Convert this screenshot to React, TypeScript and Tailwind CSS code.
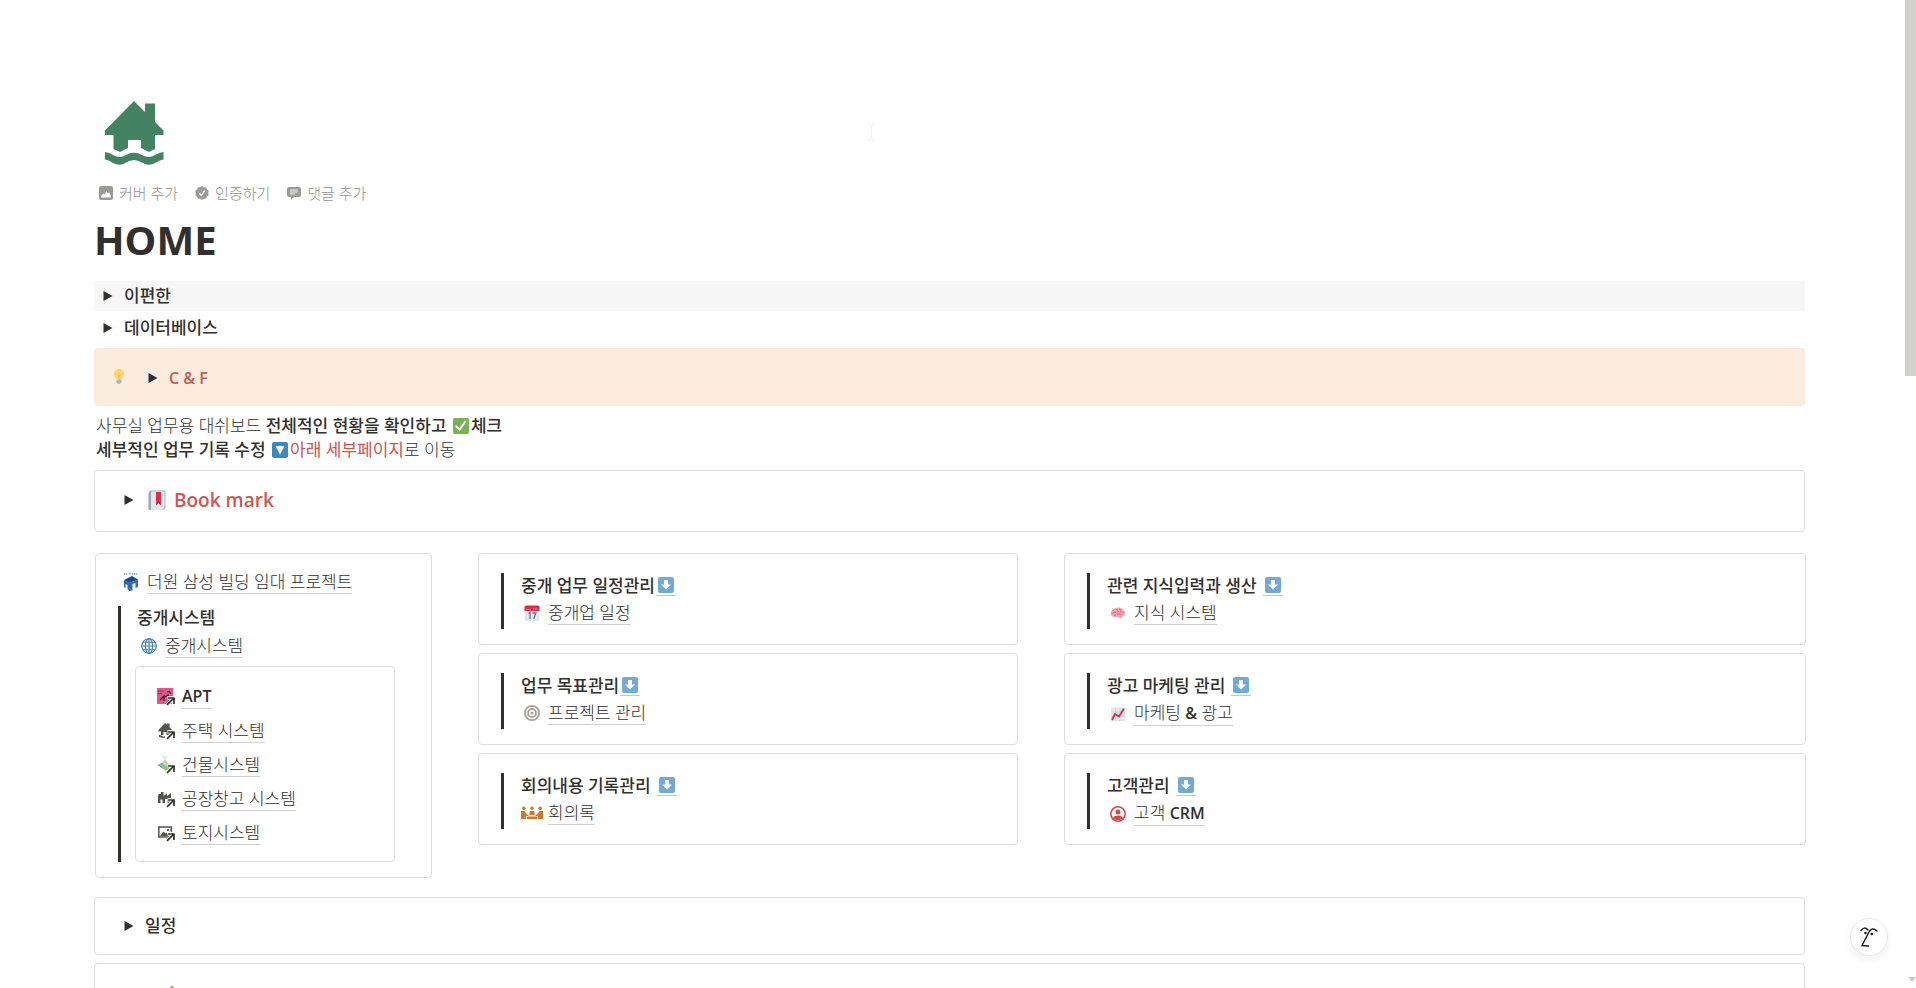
import type { ReactNode } from 'react'

const latin = "font-['Open_Sans','Noto_Sans_CJK_KR',sans-serif]"

function Arrow() {
  return (
    <svg width="10" height="10" viewBox="0 0 10 10" className="shrink-0">
      <path d="M0.5 0 9.5 5 0.5 10Z" fill="#32302c" />
    </svg>
  )
}

function HomeIcon() {
  return (
    <svg width="60" height="66" viewBox="0 0 60 66" fill="#448361">
      <path d="M30 0 41 11V2.5H51V21L59.5 29.500V34H51V48L45 51 37 47V39H24V47L16 51 9.500 48V34H1V29.500Z" />
      <path d="M1 51Q5 51.500 9 54 16 58 22 54 30 49.500 38 54 45 58 51 54 55 51.500 59.500 51V58.500Q56 59 52 61.500 45 66 38 61.500 30 56.500 22 61.500 16 66 8 61.500 5 59 1 58.500Z" />
    </svg>
  )
}

function PhotoIcon() {
  return (
    <svg width="14" height="14" viewBox="0 0 14 14">
      <rect width="14" height="14" rx="2" fill="#9b9a97" />
      <path d="M2 11.500V10L4.500 7.500 5.500 8.500 7.500 4.800 9 7.500 10 6.500 12 10V11.500Z" fill="#fff" />
    </svg>
  )
}

function VerifyIcon() {
  return (
    <svg width="14" height="14" viewBox="0 0 14 14">
      <path d="M7 0 8.900 1.300 11.200 1.400 12 3.600 13.800 5 13.200 7.200 13.800 9.300 11.900 10.600 11.100 12.700 8.900 12.800 7 14 5.100 12.800 2.900 12.700 2.100 10.600 0.200 9.300 0.800 7.200 0.200 5 2 3.600 2.800 1.400 5.100 1.300Z" fill="#9b9a97" />
      <path d="M4.300 7.300 6.300 9.500 9.700 4.700" fill="none" stroke="#fff" strokeWidth="1.300" />
    </svg>
  )
}

function CommentIcon() {
  return (
    <svg width="14" height="14" viewBox="0 0 14 14">
      <path d="M2 1H12Q14 1 14 3V9Q14 11 12 11H7L4 13.800V11H2Q0 11 0 9V3Q0 1 2 1Z" fill="#9b9a97" />
      <path d="M3 4H11M3 6H11M3 8H8" stroke="#fff" strokeWidth="0.900" />
    </svg>
  )
}

function BulbIcon() {
  return (
    <svg width="12" height="18" viewBox="0 0 12 18">
      <path d="M6 1C2.500 1 1 3.500 1 6 1 8.500 3 9.500 3.300 12H8.700C9 9.500 11 8.500 11 6 11 3.500 9.500 1 6 1Z" fill="#ffd66b" />
      <path d="M4.500 7 6 8 7.500 7M6 8V12" stroke="#f3aa3c" strokeWidth="0.700" fill="none" />
      <path d="M3.500 12H8.500V14.500L7 16H5L3.500 14.500Z" fill="#9fbccb" />
    </svg>
  )
}

function CheckEmoji() {
  return (
    <svg width="16" height="16" viewBox="0 0 16 16" className="mx-0.5 inline-block align-[-2px]">
      <rect width="16" height="16" rx="2" fill="#77b255" />
      <path d="M3.300 8.300 6.500 11.800 12.300 3.500" fill="none" stroke="#fff" strokeWidth="2" strokeLinecap="round" />
    </svg>
  )
}

function DownEmoji() {
  return (
    <svg width="16" height="16" viewBox="0 0 16 16" className="mx-0.5 inline-block align-[-2px]">
      <rect width="16" height="16" rx="2" fill="#3b88c3" />
      <path d="M3.500 4H12.500L8 12.500Z" fill="#fff" />
    </svg>
  )
}

function BookIcon() {
  return (
    <svg width="18" height="20" viewBox="0 0 18 20">
      <rect x="1" y="0.500" width="16.500" height="19" rx="2" fill="#99aab5" />
      <rect x="3" y="1.500" width="13.500" height="17" rx="1" fill="#fff" />
      <rect x="0.500" y="2" width="14.500" height="18" rx="1" fill="#e1e8ed" />
      <path d="M0.500 3V19Q0.500 20 3 20V2Q1 1.500 0.500 3Z" fill="#99aab5" />
      <path d="M8 2H13V15.500L10.500 13 8 15.500Z" fill="#dd2e44" />
    </svg>
  )
}

function JumpEmoji() {
  return (
    <svg width="16" height="16" viewBox="0 0 16 16">
      <rect width="16" height="16" rx="2" fill="#73aad4" />
      <path d="M6 3H10V7.500H13L8 12.500 3 7.500H6Z" fill="#fff" />
    </svg>
  )
}

function BuildingLogo() {
  return (
    <svg width="16" height="20" viewBox="0 0 16 20">
      <path d="M1 2H5M6 1.500H8M9 2H14" stroke="#7d9fc4" strokeWidth="1.500" strokeDasharray="1.500 0.500" />
      <path d="M1 8 9 4 15 7.500 6 11Z" fill="#16488c" />
      <path d="M1 8 6 11V18L4.500 17V13L2.500 12V16L1 15Z" fill="#2a67b0" />
      <path d="M6 11 15 7.500V15L12.500 16V11L9.500 12V18.500L6 19Z" fill="#2f6db5" />
    </svg>
  )
}

function GlobeIcon() {
  return (
    <svg width="16" height="16" viewBox="0 0 16 16" fill="none" stroke="#3a80b8" strokeWidth="1.100">
      <circle cx="8" cy="8" r="7.300" />
      <ellipse cx="8" cy="8" rx="3.600" ry="7.300" />
      <path d="M8 0.700V15.300M0.700 8H15.300M2 4.300H14M2 11.700H14" />
    </svg>
  )
}

function Shortcut({ children }: { children: ReactNode }) {
  return (
    <svg width="18" height="18" viewBox="0 0 18 18">
      {children}
      <path d="M10 16.800 16.200 10.500M10.500 9.800H16.800V16" fill="none" stroke="#fff" strokeWidth="3.500" />
      <path d="M10 16.800 16.500 10.500M11 10H17V16" fill="none" stroke="#32302c" strokeWidth="1.700" />
    </svg>
  )
}

function AptIcon() {
  return (
    <Shortcut>
      <rect width="16" height="16" fill="#e0568a" />
      <path d="M1 3H7M1 5.500H5" stroke="#7d2347" strokeWidth="1.200" strokeDasharray="1.500 0.500" />
      <path d="M3 12 7 8V13M8 9 11 7 13 10M10 4 12 3.500 14 6" stroke="#3c1527" strokeWidth="1.200" fill="none" />
    </Shortcut>
  )
}

function CottageIcon() {
  return (
    <Shortcut>
      <path d="M8 1 10 3V1.500H12.500V5L15 8V9.500H13V13H9.500V10H6.500V13H4V9.500H1.500V8ZM2 13Q4 13 5 14 7 15 8 14V15.500Q5 16.500 2 14.800Z" fill="#55534e" />
    </Shortcut>
  )
}

function IslandIcon() {
  return (
    <Shortcut>
      <path d="M0.500 9 8 5.500 15.500 10 9 15Z" fill="#91c46c" />
      <path d="M0.500 9 4 7.500 7 10 4.500 11.500Z" fill="#6db5b8" />
      <path d="M6 8V5.500L8 3.500 10.500 6V9.500L8 10.500Z" fill="#c9cfc3" />
      <path d="M5.500 1H10M7.800 1V5" stroke="#b5dcec" strokeWidth="1" />
    </Shortcut>
  )
}

function FactoryIcon() {
  return (
    <Shortcut>
      <path d="M1.500 4H4V2H6.500V6L10 3.500V6L14 3V13H10.500V9H8V13H5.500V9.500H3.500V13H1V6.500Z" fill="#55534e" />
    </Shortcut>
  )
}

function LandscapeIcon() {
  return (
    <Shortcut>
      <rect x="1.800" y="3" width="12.500" height="10" fill="none" stroke="#55534e" strokeWidth="1.500" />
      <path d="M3 12 6.500 7.500 8.500 9.500 9.500 8.500 12 12Z" fill="#55534e" />
      <circle cx="11" cy="6" r="1.100" fill="#55534e" />
    </Shortcut>
  )
}

function CalendarIcon() {
  return (
    <svg width="16" height="16" viewBox="0 0 16 16">
      <rect x="0.500" y="1" width="15" height="15" rx="1.500" fill="#e1e8ed" />
      <path d="M0.500 6V2Q0.500 0.500 2 0.500H14Q15.500 0.500 15.500 2V6Z" fill="#dd2e44" />
      <path d="M2.500 4.500H7M9 4H13" stroke="#f5b8c0" strokeWidth="1" strokeDasharray="1 0.600" />
      <path d="M4.500 8.500 6 7.500V14M8.500 8H11.800L9.800 14" fill="none" stroke="#66757f" strokeWidth="1.300" />
    </svg>
  )
}

function TargetIcon() {
  return (
    <svg width="16" height="16" viewBox="0 0 16 16" fill="none" stroke="#a5a29a" strokeWidth="1.800">
      <circle cx="8" cy="8" r="7.100" />
      <circle cx="8" cy="8" r="4" />
      <circle cx="8" cy="8" r="1.500" fill="#a5a29a" stroke="none" />
    </svg>
  )
}

function MeetingIcon() {
  return (
    <svg width="22" height="14" viewBox="0 0 22 14" fill="#cb7b22">
      <circle cx="2.800" cy="2.300" r="1.800" />
      <circle cx="11" cy="2.300" r="1.800" />
      <circle cx="19.200" cy="2.300" r="1.800" />
      <path d="M0 5H3.500L6 8.500H7.500V10H5V13H0ZM22 5H18.500L16 8.500H14.500V10H17V13H22ZM8.500 5H13.500V9H8.500ZM6 10.500H16V13H6Z" />
    </svg>
  )
}

function BrainIcon() {
  return (
    <svg width="16" height="16" viewBox="0 0 16 16">
      <path d="M1 10Q0 7 2.500 5 4.500 2.500 8 2.500 11 2 13 4.500 15.500 6.500 15 9.500 15 11.500 12.500 11.500 12 14 9.500 13 8 11.500 5.500 12 2 12.500 1 10Z" fill="#f4a3b4" />
      <path d="M2.500 8Q4 6 6 7.500M6 4.500Q8 4 8 6.500M9 4Q12 5 10.500 7.500M7 9.500Q9 8 11 10M12 6.500 13.500 8M4 10H6" fill="none" stroke="#dc617e" strokeWidth="0.900" />
    </svg>
  )
}

function ChartIcon() {
  return (
    <svg width="16" height="16" viewBox="0 0 16 16">
      <rect x="1" y="1.500" width="14" height="13.500" fill="#dfe7ed" />
      <path d="M1 6H15M1 10.500H15M5.500 1.500V15M10 1.500V15" stroke="#c3d0d9" strokeWidth="0.700" />
      <path d="M2 14 5 8 9 10.500 14 2.500" fill="none" stroke="#d6304a" strokeWidth="1.800" />
    </svg>
  )
}

function PersonIcon() {
  return (
    <svg width="16" height="16" viewBox="0 0 16 16">
      <circle cx="8" cy="8" r="7.200" fill="none" stroke="#d44c47" strokeWidth="1.600" />
      <circle cx="8" cy="6" r="2.500" fill="#d44c47" />
      <path d="M3 12.500Q3.500 9.500 8 9.500T13 12.500Q8 16 3 12.500Z" fill="#d44c47" />
    </svg>
  )
}

function PageLink({ icon, children }: { icon: ReactNode; children: ReactNode }) {
  return (
    <a href="#" className="flex items-center gap-[5px]">
      <span className="flex w-[22px] shrink-0 justify-center">{icon}</span>
      <span className="border-b border-[#d0d0ce] leading-[23px] font-light">{children}</span>
    </a>
  )
}

const columns = [
  [
    { title: '중개 업무 일정관리', gap: false, icon: <CalendarIcon />, link: '중개업 일정' },
    { title: '업무 목표관리', gap: false, icon: <TargetIcon />, link: '프로젝트 관리' },
    { title: '회의내용 기록관리', gap: true, icon: <MeetingIcon />, link: '회의록' },
  ],
  [
    { title: '관련 지식입력과 생산', gap: true, icon: <BrainIcon />, link: '지식 시스템' },
    { title: '광고 마케팅 관리', gap: true, icon: <ChartIcon />, link: <>마케팅 <span className="text-base font-semibold">&amp;</span> 광고</> },
    { title: '고객관리', gap: true, icon: <PersonIcon />, link: <>고객 <span className="text-base font-semibold">CRM</span></> },
  ],
]

const systems = [
  { icon: <AptIcon />, label: <span className="text-base font-semibold">APT</span> },
  { icon: <CottageIcon />, label: '주택 시스템' },
  { icon: <IslandIcon />, label: '건물시스템' },
  { icon: <FactoryIcon />, label: '공장창고 시스템' },
  { icon: <LandscapeIcon />, label: '토지시스템' },
]

export default function App() {
  return (
    <div className={`relative h-screen overflow-hidden bg-white text-[17px] text-[#32302c] ${latin}`}>
      <main className="pt-[101px] pr-[111px] pl-[94px]">
        <div className="pl-[10px]">
          <HomeIcon />
        </div>

        <div className="mt-3.5 flex h-6 items-center gap-[17px] pl-[5px] text-[15px] font-light text-[#91908d]">
          <button className="flex items-center gap-1.5"><PhotoIcon />커버 추가</button>
          <button className="flex items-center gap-1.5"><VerifyIcon />인증하기</button>
          <button className="flex items-center gap-1.5"><CommentIcon />댓글 추가</button>
        </div>

        <h1 className="mt-[11px] text-[40px] leading-[48px] font-bold">HOME</h1>

        <button className="mt-[17px] flex h-[30px] w-full items-center gap-[11px] bg-[#f7f7f7] pl-[9px] font-medium">
          <Arrow />이편한
        </button>
        <button className="mt-0.5 flex h-[30px] w-full items-center gap-[11px] pl-[9px] font-medium">
          <Arrow />데이터베이스
        </button>

        <div className="mt-[5px] flex h-[58px] items-center rounded bg-[#fbecdd] pl-[19px]">
          <BulbIcon />
          <button className="mt-0.5 ml-[23px] flex items-center gap-[11px] text-base font-semibold text-[#cd5753]">
            <Arrow />C &amp; F
          </button>
        </div>

        <p className="mt-2 pl-[2px] leading-6 font-light">
          사무실 업무용 대쉬보드 <b className="font-medium">전체적인 현황을 확인하고 <CheckEmoji />체크</b>
          <br />
          <b className="font-medium">세부적인 업무 기록 수정 <DownEmoji /></b>
          <span className="font-normal text-[#cd5753]">아래 세부페이지</span>로 이동
        </p>

        <section className="mt-2 flex h-[62px] items-center rounded border border-[#dededc] pb-0.5 pl-[29px]">
          <button className="flex items-center gap-3.5 text-[19px] font-semibold text-[#cd5753]">
            <Arrow />
            <span className="flex items-center gap-2"><BookIcon />Book mark</span>
          </button>
        </section>

        <div className="mt-[21px] flex items-start">
          <section className="ml-px w-[337px] shrink-0 rounded border border-[#dededc] px-[22px] pt-4 pb-[15px]">
            <div className="pl-[2px] leading-6">
              <PageLink icon={<BuildingLogo />}>더원 삼성 빌딩 임대 프로젝트</PageLink>
            </div>
            <div className="mt-3 border-l-[3px] border-[#32302c] pr-3.5 pl-[14px]">
              <h2 className="pl-[2px] leading-6 font-medium">중개시스템</h2>
              <div className="mt-1 pl-[3px] leading-6">
                <PageLink icon={<GlobeIcon />}>중개시스템</PageLink>
              </div>
              <ul className="mt-2 flex flex-col gap-2.5 rounded border border-[#dededc] pt-[17px] pb-4 pl-[19px]">
                {systems.map((s, i) => (
                  <li key={i}>
                    <PageLink icon={s.icon}>{s.label}</PageLink>
                  </li>
                ))}
              </ul>
            </div>
          </section>

          {columns.map((cards, i) => (
            <div key={i} className={i === 0 ? 'ml-[46px] flex flex-[540] flex-col gap-2' : '-mr-px ml-[46px] flex flex-[742] flex-col gap-2'}>
              {cards.map(c => (
                <section key={c.title} className="h-[92px] rounded border border-[#dededc] py-[19px] pl-[22px]">
                  <div className="h-14 border-l-[3px] border-[#32302c] pl-[17px]">
                    <h2 className="flex h-[26px] items-center font-medium">
                      {c.title}
                      <a href="#" className={c.gap ? 'ml-1.5 border-b border-[#c4c4c2] px-0.5 pt-px pb-0.5' : 'ml-px border-b border-[#c4c4c2] px-0.5 pt-px pb-0.5'}>
                        <JumpEmoji />
                      </a>
                    </h2>
                    <div className="mt-0.5">
                      <PageLink icon={c.icon}>{c.link}</PageLink>
                    </div>
                  </div>
                </section>
              ))}
            </div>
          ))}
        </div>

        <section className="mt-[19px] flex h-[58px] items-center rounded border border-[#dededc] pl-[29px]">
          <button className="flex items-center gap-[11px] font-medium"><Arrow />일정</button>
        </section>
        <section className="mt-2 h-[58px] rounded border border-[#dededc] pt-[22px] pl-[69px]">
          <svg width="16" height="16" viewBox="0 0 16 16">
            <path d="M7 0H9L15 14H1Z" fill="#c79a4b" />
          </svg>
        </section>
      </main>

      <svg width="9" height="17" viewBox="0 0 9 17" className="absolute top-[124px] left-[867px]">
        <path d="M1 0.500H4M5 0.500H8M4.500 1V16M1 16.500H4M5 16.500H8" stroke="#f2f2f2" fill="none" />
      </svg>
      <div className="absolute top-0 right-0 h-[376px] w-[11px] bg-[#d3d1cb]" />
      <svg width="8" height="5" viewBox="0 0 8 5" className="absolute right-0 bottom-[6px]">
        <path d="M0 0H8L4 5Z" fill="#cbcac6" />
      </svg>
      <button aria-label="AI" className="absolute right-7 bottom-[32px] flex size-[38px] items-center justify-center rounded-full border border-[#ecebe8] bg-white shadow-[0_4px_10px_rgba(0,0,0,0.06)]">
        <svg width="18" height="22" viewBox="0 0 18 22" fill="none" stroke="#1f1e1c" strokeWidth="1.500" strokeLinecap="round">
          <path d="M1 4.500Q4.500 0 8 4M9 6Q12 0.500 17 5M9 6 2 19.500 8.500 20" />
          <circle cx="5.500" cy="7" r="1.300" fill="#1f1e1c" stroke="none" />
          <circle cx="11.800" cy="8" r="1.300" fill="#1f1e1c" stroke="none" />
        </svg>
      </button>
    </div>
  )
}
